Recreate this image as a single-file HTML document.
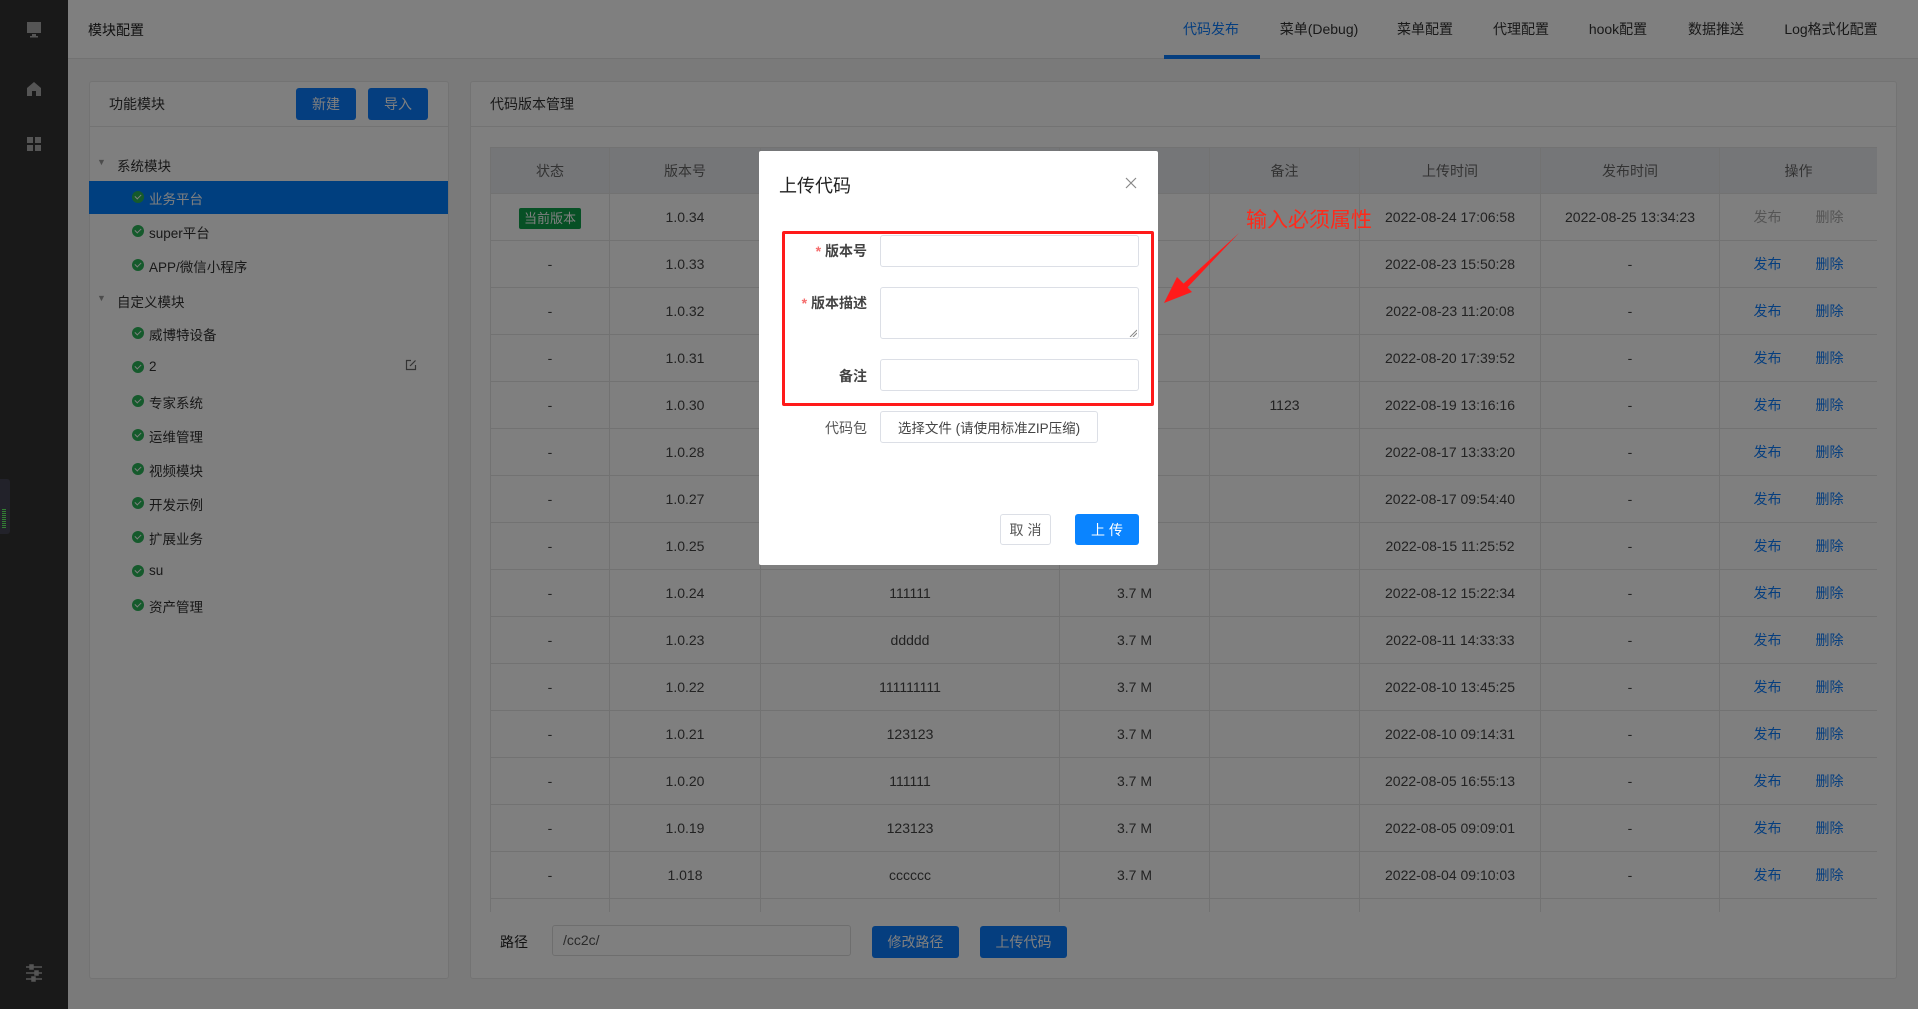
<!DOCTYPE html>
<html><head><meta charset="utf-8"><style>
*{box-sizing:border-box;margin:0;padding:0}
body{width:1918px;height:1009px;overflow:hidden;position:relative;background:#f5f5f5;font-family:"Liberation Sans","Noto Sans CJK SC",sans-serif;color:#333;font-size:14px}
.abs{position:absolute}
.side{left:0;top:0;width:68px;height:1009px;background:#333}
.hdr{left:68px;top:0;width:1850px;height:59px;background:#fff;border-bottom:1px solid #e4e4e4}
.tab{position:absolute;top:19px;font-size:14px;color:#333;transform:translateX(-50%);white-space:nowrap}
.panel{background:#fff;border:1px solid #e6e6e6;border-radius:3px}
.btn{position:absolute;background:#0a7cff;color:#fff;border-radius:3px;font-size:14px;display:flex;align-items:center;justify-content:center}
.tree{position:absolute;font-size:13.5px;color:#333;white-space:nowrap}
.chk{position:absolute;width:12px;height:12px;border-radius:50%;background:#2bb459}
.chk:after{content:"";position:absolute;left:3px;top:3px;width:5px;height:3px;border-left:1.5px solid #fff;border-bottom:1.5px solid #fff;transform:rotate(-45deg)}
table{border-collapse:collapse;position:absolute;left:490px;top:147px;width:1387px;table-layout:fixed}
td,th{border:1px solid #e4e4e4;text-align:center;height:47px;font-weight:normal;font-size:14px;color:#444}
th{height:46px;background:#ebedf0;color:#666}
.op{color:#0a7cff}
.op span,.g span{display:inline-block;width:62px}
.g{color:#aaa}
.ov{left:0;top:0;width:1918px;height:1009px;background:rgba(0,0,0,0.5)}
.modal{left:759px;top:151px;width:399px;height:414px;background:#fff;border-radius:2px}
.lbl{position:absolute;right:0;font-size:14px;color:#555;text-align:right}
.inp{position:absolute;left:880px;width:259px;border:1px solid #dcdfe6;border-radius:3px;background:#fff}
</style></head><body>
<div class="abs side">
 <svg class="abs" style="left:25px;top:21px" width="18" height="18" viewBox="0 0 18 18"><rect x="2" y="1" width="14" height="11" fill="#aaa"/><rect x="7" y="13" width="4" height="2" fill="#aaa"/><rect x="5" y="15" width="8" height="1.5" fill="#aaa"/></svg>
 <svg class="abs" style="left:25px;top:80px" width="18" height="18" viewBox="0 0 18 18"><path d="M9 2 L16 8 V16 H11 V11 H7 V16 H2 V8 Z" fill="#aaa"/></svg>
 <svg class="abs" style="left:25px;top:135px" width="18" height="18" viewBox="0 0 18 18"><rect x="2" y="2" width="6" height="6" fill="#aaa"/><rect x="10" y="2" width="6" height="6" fill="#aaa"/><rect x="2" y="10" width="6" height="6" fill="#aaa"/><rect x="10" y="10" width="6" height="6" fill="#aaa"/></svg>
 <svg class="abs" style="left:24px;top:962px" width="20" height="20" viewBox="0 0 20 20" stroke="#aaa" stroke-width="1.5"><line x1="2" y1="5" x2="18" y2="5"/><line x1="2" y1="11" x2="18" y2="11"/><line x1="2" y1="17" x2="18" y2="17"/><rect x="6" y="3" width="3" height="4" fill="#aaa"/><rect x="11" y="9" width="3" height="4" fill="#aaa"/><rect x="8" y="15" width="3" height="4" fill="#aaa"/></svg>
 <div class="abs" style="left:0;top:479px;width:10px;height:55px;background:#445;border-radius:0 3px 3px 0"><div style="margin:30px 0 0 2px;width:4px;height:20px;background:repeating-linear-gradient(#6f6 0 1px,transparent 1px 2px)"></div></div>
</div>
<div class="abs hdr">
 <div class="abs" style="left:20px;top:20px;font-size:14px;color:#222">模块配置</div>
</div>
<div class="tab" style="left:1211px;color:#0a7cff">代码发布</div>
<div class="abs" style="left:1164px;top:55px;width:96px;height:4px;background:#0a7cff"></div>
<div class="tab" style="left:1319px">菜单(Debug)</div>
<div class="tab" style="left:1425px">菜单配置</div>
<div class="tab" style="left:1521px">代理配置</div>
<div class="tab" style="left:1618px">hook配置</div>
<div class="tab" style="left:1716px">数据推送</div>
<div class="tab" style="left:1831px">Log格式化配置</div>

<div class="abs panel" style="left:89px;top:81px;width:360px;height:898px"></div>
<div class="abs" style="left:89px;top:126px;width:360px;height:1px;background:#e6e6e6"></div>
<div class="abs" style="left:109px;top:94px;font-size:14px">功能模块</div>
<div class="btn" style="left:296px;top:88px;width:60px;height:32px">新建</div>
<div class="btn" style="left:368px;top:88px;width:60px;height:32px">导入</div>
<div class="abs" style="left:89px;top:181px;width:359px;height:33px;background:#007eff"></div>
<div class="tree" style="left:97px;top:157px;font-size:9px;color:#999">▼</div>
<div class="tree" style="left:117px;top:155px">系统模块</div>
<div class="chk" style="left:132px;top:191px"></div><div class="tree" style="left:149px;top:188px;color:#fff">业务平台</div>
<div class="chk" style="left:132px;top:225px"></div><div class="tree" style="left:149px;top:222px">super平台</div>
<div class="chk" style="left:132px;top:259px"></div><div class="tree" style="left:149px;top:256px">APP/微信小程序</div>
<div class="tree" style="left:97px;top:293px;font-size:9px;color:#999">▼</div>
<div class="tree" style="left:117px;top:291px">自定义模块</div>
<div class="chk" style="left:132px;top:327px"></div><div class="tree" style="left:149px;top:324px">威博特设备</div>
<div class="chk" style="left:132px;top:361px"></div><div class="tree" style="left:149px;top:359px">2</div>
<svg class="abs" style="left:405px;top:359px" width="12" height="12" viewBox="0 0 12 12" fill="none" stroke="#666" stroke-width="1.2"><path d="M6 1.5H1.5V10.5H10.5V6"/><path d="M5 7L10.5 1.5"/></svg>
<div class="chk" style="left:132px;top:395px"></div><div class="tree" style="left:149px;top:392px">专家系统</div>
<div class="chk" style="left:132px;top:429px"></div><div class="tree" style="left:149px;top:426px">运维管理</div>
<div class="chk" style="left:132px;top:463px"></div><div class="tree" style="left:149px;top:460px">视频模块</div>
<div class="chk" style="left:132px;top:497px"></div><div class="tree" style="left:149px;top:494px">开发示例</div>
<div class="chk" style="left:132px;top:531px"></div><div class="tree" style="left:149px;top:528px">扩展业务</div>
<div class="chk" style="left:132px;top:565px"></div><div class="tree" style="left:149px;top:563px">su</div>
<div class="chk" style="left:132px;top:599px"></div><div class="tree" style="left:149px;top:596px">资产管理</div>

<div class="abs panel" style="left:470px;top:81px;width:1427px;height:898px"></div>
<div class="abs" style="left:470px;top:126px;width:1427px;height:1px;background:#e6e6e6"></div>
<div class="abs" style="left:490px;top:94px">代码版本管理</div>
<div class="abs" style="left:490px;top:147px;width:1387px;height:765px;overflow:hidden">
<table style="left:0;top:0">
<colgroup><col style="width:119px"><col style="width:151px"><col style="width:299px"><col style="width:150px"><col style="width:150px"><col style="width:181px"><col style="width:179px"><col style="width:158px"></colgroup>
<tr><th>状态</th><th>版本号</th><th>描述</th><th>大小</th><th>备注</th><th>上传时间</th><th>发布时间</th><th>操作</th></tr>
<tr><td><span style="background:#0ea04a;color:#fff;border-radius:2px;padding:3px 5px;font-size:13px">当前版本</span></td><td>1.0.34</td><td></td><td></td><td></td><td>2022-08-24 17:06:58</td><td>2022-08-25 13:34:23</td><td class="g"><span>发布</span><span>删除</span></td></tr>
<tr><td>-</td><td>1.0.33</td><td></td><td></td><td></td><td>2022-08-23 15:50:28</td><td>-</td><td class="op"><span>发布</span><span>删除</span></td></tr>
<tr><td>-</td><td>1.0.32</td><td></td><td></td><td></td><td>2022-08-23 11:20:08</td><td>-</td><td class="op"><span>发布</span><span>删除</span></td></tr>
<tr><td>-</td><td>1.0.31</td><td></td><td></td><td></td><td>2022-08-20 17:39:52</td><td>-</td><td class="op"><span>发布</span><span>删除</span></td></tr>
<tr><td>-</td><td>1.0.30</td><td></td><td></td><td>1123</td><td>2022-08-19 13:16:16</td><td>-</td><td class="op"><span>发布</span><span>删除</span></td></tr>
<tr><td>-</td><td>1.0.28</td><td></td><td></td><td></td><td>2022-08-17 13:33:20</td><td>-</td><td class="op"><span>发布</span><span>删除</span></td></tr>
<tr><td>-</td><td>1.0.27</td><td></td><td></td><td></td><td>2022-08-17 09:54:40</td><td>-</td><td class="op"><span>发布</span><span>删除</span></td></tr>
<tr><td>-</td><td>1.0.25</td><td></td><td></td><td></td><td>2022-08-15 11:25:52</td><td>-</td><td class="op"><span>发布</span><span>删除</span></td></tr>
<tr><td>-</td><td>1.0.24</td><td>111111</td><td>3.7 M</td><td></td><td>2022-08-12 15:22:34</td><td>-</td><td class="op"><span>发布</span><span>删除</span></td></tr>
<tr><td>-</td><td>1.0.23</td><td>ddddd</td><td>3.7 M</td><td></td><td>2022-08-11 14:33:33</td><td>-</td><td class="op"><span>发布</span><span>删除</span></td></tr>
<tr><td>-</td><td>1.0.22</td><td>111111111</td><td>3.7 M</td><td></td><td>2022-08-10 13:45:25</td><td>-</td><td class="op"><span>发布</span><span>删除</span></td></tr>
<tr><td>-</td><td>1.0.21</td><td>123123</td><td>3.7 M</td><td></td><td>2022-08-10 09:14:31</td><td>-</td><td class="op"><span>发布</span><span>删除</span></td></tr>
<tr><td>-</td><td>1.0.20</td><td>111111</td><td>3.7 M</td><td></td><td>2022-08-05 16:55:13</td><td>-</td><td class="op"><span>发布</span><span>删除</span></td></tr>
<tr><td>-</td><td>1.0.19</td><td>123123</td><td>3.7 M</td><td></td><td>2022-08-05 09:09:01</td><td>-</td><td class="op"><span>发布</span><span>删除</span></td></tr>
<tr><td>-</td><td>1.018</td><td>cccccc</td><td>3.7 M</td><td></td><td>2022-08-04 09:10:03</td><td>-</td><td class="op"><span>发布</span><span>删除</span></td></tr>
<tr><td></td><td></td><td></td><td></td><td></td><td></td><td></td><td></td></tr>
</table></div>
<div class="abs" style="left:500px;top:932px;font-size:14px;color:#222">路径</div>
<div class="abs" style="left:552px;top:925px;width:299px;height:31px;border:1px solid #dcdcdc;border-radius:3px;background:#fff;padding:6px 10px;color:#555">/cc2c/</div>
<div class="btn" style="left:872px;top:926px;width:87px;height:32px">修改路径</div>
<div class="btn" style="left:980px;top:926px;width:87px;height:32px">上传代码</div>

<div class="abs ov"></div>

<div class="abs modal"></div>
<div class="abs" style="left:779px;top:172px;font-size:18px;color:#222">上传代码</div>
<svg class="abs" style="left:1125px;top:177px" width="12" height="12" viewBox="0 0 12 12" stroke="#888" stroke-width="1.2"><path d="M1 1L11 11M11 1L1 11"/></svg>
<div class="abs" style="left:782px;top:231px;width:372px;height:175px;border:3px solid #ff1a1a;border-radius:2px"></div>
<div class="abs" style="left:760px;top:241px;width:107px;height:20px"><div class="lbl" style="font-weight:bold;color:#444"><span style="color:#f56c6c">* </span>版本号</div></div>
<div class="inp" style="top:235px;height:32px"></div>
<div class="abs" style="left:760px;top:293px;width:107px;height:20px"><div class="lbl" style="font-weight:bold;color:#444"><span style="color:#f56c6c">* </span>版本描述</div></div>
<div class="inp" style="top:287px;height:52px"></div>
<svg class="abs" style="left:1129px;top:329px" width="8" height="8" stroke="#888"><path d="M1 8L8 1M4 8L8 4"/></svg>
<div class="abs" style="left:760px;top:366px;width:107px;height:20px"><div class="lbl" style="font-weight:bold;color:#444">备注</div></div>
<div class="inp" style="top:359px;height:32px"></div>
<div class="abs" style="left:760px;top:418px;width:107px;height:20px"><div class="lbl">代码包</div></div>
<div class="abs" style="left:880px;top:411px;width:218px;height:32px;border:1px solid #dcdfe6;border-radius:3px;display:flex;align-items:center;justify-content:center;font-size:13.5px;color:#444">选择文件 (请使用标准ZIP压缩)</div>
<div class="abs" style="left:1000px;top:514px;width:51px;height:31px;border:1px solid #dcdfe6;border-radius:3px;display:flex;align-items:center;justify-content:center;font-size:14px;color:#555;letter-spacing:4px;padding-left:4px">取消</div>
<div class="abs" style="left:1075px;top:514px;width:64px;height:31px;background:#0a84ff;border-radius:3px;display:flex;align-items:center;justify-content:center;font-size:14px;color:#fff;letter-spacing:4px;padding-left:4px">上传</div>

<div class="abs" style="left:1246px;top:204px;font-size:21px;color:#ff2a1a;white-space:nowrap">输入必须属性</div>
<svg class="abs" style="left:1150px;top:225px" width="100" height="85" viewBox="0 0 100 85"><path d="M89 8 L32 60 L36 64 Z" fill="#ff1a1a"/><path d="M14 78 L27 52 L42 67 Z" fill="#ff1a1a"/></svg>
</body></html>
